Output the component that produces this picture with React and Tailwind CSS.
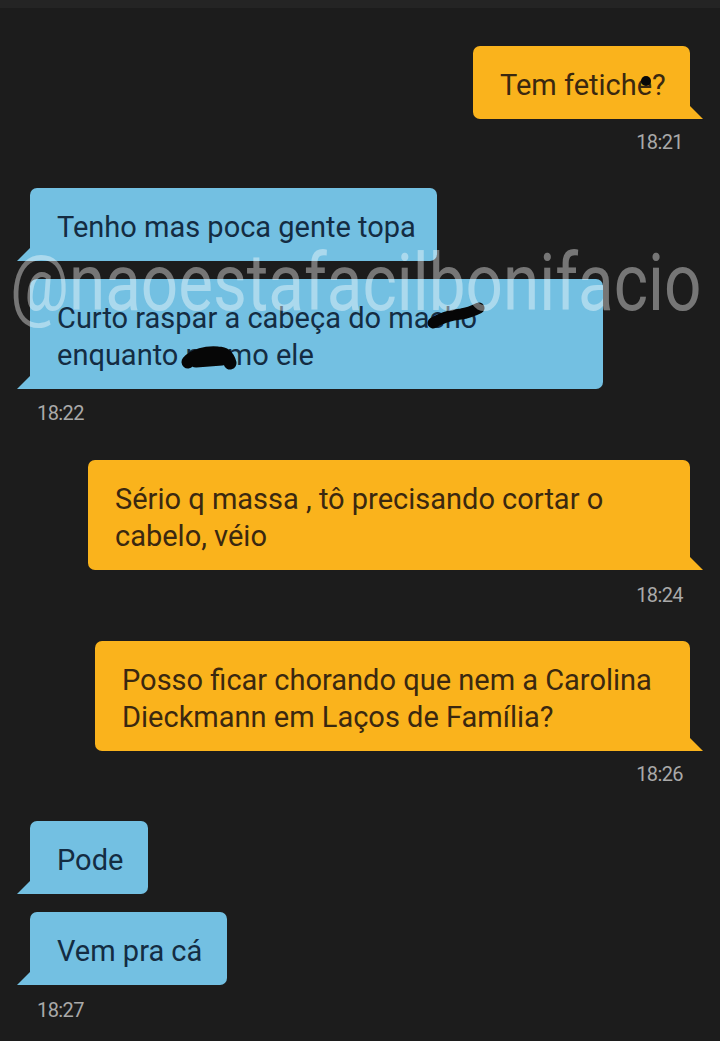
import React from 'react';

const font = '[font-family:Roboto,"Noto_Sans",sans-serif]';

function Tail({ side, color }) {
  // small corner spike under the bubble, like the app's chat bubbles
  if (side === 'left') {
    return (
      <svg className="absolute bottom-0 left-[-13px]" width="14" height="14" viewBox="0 0 14 14">
        <polygon points="14,0 14,14 0,14" fill={color} />
      </svg>
    );
  }
  return (
    <svg className="absolute bottom-0 right-[-13px]" width="14" height="14" viewBox="0 0 14 14">
      <polygon points="0,0 0,14 14,14" fill={color} />
    </svg>
  );
}

function Bubble({ side, width, children, className = '' }) {
  const sent = side === 'right';
  const color = sent ? '#fab31c' : '#73c0e2';
  return (
    <div
      className={`relative whitespace-nowrap px-[27px] pt-[21px] pb-[15px] text-[29px] leading-[37px] ${
        sent
          ? 'self-end mr-[30px] rounded-t-[7px] rounded-bl-[7px] bg-[#fab31c] text-[#3a2810]'
          : 'self-start ml-[30px] rounded-t-[7px] rounded-br-[7px] bg-[#73c0e2] text-[#142c42]'
      } ${className}`}
      style={{ width }}
    >
      {children}
      <Tail side={sent ? 'right' : 'left'} color={color} />
    </div>
  );
}

function Time({ side, children, className = '' }) {
  return (
    <div
      className={`h-[22px] text-[20px] leading-[22px] tracking-[-0.03em] text-[#a9a9a9] ${
        side === 'right' ? 'self-end mr-[37px]' : 'self-start ml-[37px]'
      } ${className}`}
    >
      {children}
    </div>
  );
}

function Scribble({ className, d, w = 11 }) {
  return (
    <svg className={`absolute ${className}`} viewBox="0 0 60 30">
      <path d={d} fill="none" stroke="#060606" strokeWidth={w} strokeLinecap="round" strokeLinejoin="round" />
    </svg>
  );
}

export default function App() {
  return (
    <div className={`relative min-h-screen w-[720px] overflow-hidden bg-[#1c1c1c] ${font}`}>
      <div className="h-[8px] bg-[#242424]" />

      <div className="flex flex-col pb-[20px]">
        <Bubble side="right" width={217} className="mt-[38px]">
          Tem fetich
          <span className="relative">
            e
            <span className="absolute left-[4px] top-[8px] h-[10px] w-[10px] rounded-full bg-[#080808]" />
          </span>
          ?
        </Bubble>
        <Time side="right" className="mt-[12px]">18:21</Time>

        <Bubble side="left" width={407} className="mt-[35px]">
          Tenho mas poca gente topa
        </Bubble>
        <Bubble side="left" width={573} className="mt-[18px]">
          Curto raspar a cabeça do ma
          <span className="relative">
            cho
            <Scribble
              className="left-[-4px] top-[0px] h-[30px] w-[60px]"
              d="M8 22 C18 16, 26 14, 36 13 C44 12, 50 9, 54 7"
            />
          </span>
          <br />
          enquanto{' '}
          <span className="relative">
            ma
            <Scribble
              className="left-[-6px] top-[4px] h-[30px] w-[60px]"
              w={13}
              d="M8 20 C14 13, 26 10, 38 11 C44 11, 48 14, 50 21 M16 19 L42 17"
            />
          </span>
          mo ele
        </Bubble>
        <Time side="left" className="mt-[13px]">18:22</Time>

        <Bubble side="right" width={602} className="mt-[36px]">
          Sério q massa , tô precisando cortar o
          <br />
          cabelo, véio
        </Bubble>
        <Time side="right" className="mt-[14px]">18:24</Time>

        <Bubble side="right" width={595} className="mt-[35px]">
          Posso ficar chorando que nem a Carolina
          <br />
          Dieckmann em Laços de Família?
        </Bubble>
        <Time side="right" className="mt-[12px]">18:26</Time>

        <Bubble side="left" width={118} className="mt-[36px]">
          Pode
        </Bubble>
        <Bubble side="left" width={197} className="mt-[18px]">
          Vem pra cá
        </Bubble>
        <Time side="left" className="mt-[14px]">18:27</Time>
      </div>

      {/* watermark over the screenshot */}
      <div className="pointer-events-none absolute left-[10px] top-[243px] origin-left scale-x-[0.82] whitespace-nowrap text-[80px] leading-[80px] text-white/40">
        @naoestafacilbonifacio
      </div>
    </div>
  );
}
